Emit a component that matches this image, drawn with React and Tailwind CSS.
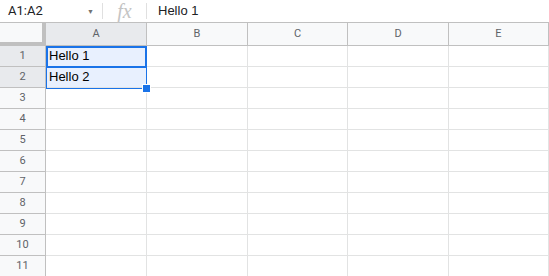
import React from 'react';

const columns = ['A', 'B', 'C', 'D', 'E'];
const widths = ['w-[101px]', 'w-[101px]', 'w-[100px]', 'w-[101px]', 'flex-1'];
const rows = [1, 2, 3, 4, 5, 6, 7, 8, 9, 10, 11];
const values = { 1: 'Hello 1', 2: 'Hello 2' };

const App = () => {
    return (
        <div className="w-[549px] h-[276px] overflow-hidden bg-white font-['Roboto','Liberation_Sans',sans-serif]">
            {/* Formula bar */}
            <div className="h-[23px] flex items-center border-b border-[#c0c0c0] text-[13px] text-[#202124]">
                <div className="w-[102px] flex items-center justify-between pl-[8px] pr-[8px]">
                    <span>A1:A2</span>
                    <span className="text-[#727272] text-[7px] mt-[2px]">▼</span>
                </div>
                <div className="w-px h-[16px] bg-[#e0e0e0]" />
                <div className="w-[43px] h-[22px] flex items-center justify-center">
                    <span className="font-['Liberation_Serif',serif] italic text-[20px] leading-[22px] text-[#c4c4c4]">fx</span>
                </div>
                <div className="w-px h-[16px] bg-[#e0e0e0]" />
                <span className="pl-[11px] font-['Liberation_Sans',sans-serif]">Hello 1</span>
            </div>

            {/* Column headers */}
            <div className="flex h-[23px] text-[11px] text-[#5f6368]">
                <div className="w-[46px] bg-[#f8f9fa] border-r-[4px] border-b-[4px] border-[#c0c0c0] box-border" />
                {columns.map((c, i) => (
                    <div
                        key={c}
                        className={`${widths[i]} flex items-center justify-center border-b border-r border-[#c0c0c0] ${c === 'A' ? 'bg-[#e8eaed]' : 'bg-[#f8f9fa]'}`}
                    >
                        {c}
                    </div>
                ))}
            </div>

            {/* Body */}
            <div className="relative">
                {rows.map(r => (
                    <div key={r} className="flex h-[21px]">
                        <div
                            className={`w-[46px] flex items-center justify-center border-r border-b border-[#c0c0c0] text-[11px] text-[#5f6368] ${r <= 2 ? 'bg-[#e8eaed]' : 'bg-[#f8f9fa]'}`}
                        >
                            {r}
                        </div>
                        {columns.map((c, i) => (
                            <div
                                key={c}
                                className={`${widths[i]} border-r border-b border-[#e2e3e3] flex items-end pl-[3px] pb-[2px] text-[13px] leading-[16px] text-black font-['Liberation_Sans',sans-serif] ${c === 'A' && r <= 2 ? 'bg-[#e8f0fe]' : ''}`}
                            >
                                {c === 'A' ? values[r] : null}
                            </div>
                        ))}
                    </div>
                ))}

                {/* Selection range */}
                <div className="absolute left-[46px] top-0 w-[101px] h-[43px] border border-[#1a73e8] pointer-events-none" />
                <div className="absolute left-[46px] top-0 w-[101px] h-[22px] border-2 border-[#1a73e8] pointer-events-none" />
                <div className="absolute left-[143px] top-[39px] w-[7px] h-[7px] bg-[#1a73e8] border border-white box-content -translate-x-[1px] -translate-y-[1px]" />
            </div>
        </div>
    );
};

export default App;
